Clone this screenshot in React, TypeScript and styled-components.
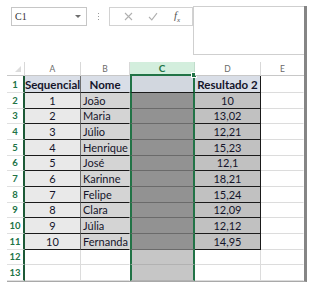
import React from 'react';
import styled, { createGlobalStyle } from 'styled-components';

const GlobalStyle = createGlobalStyle`
  body {
    margin: 0;
    background: #ffffff;
    font-family: Lato, "Liberation Sans", sans-serif;
  }
`;

const GREEN = '#217346';

const Page = styled.div`
  width: 311px;
  height: 288px;
  box-sizing: border-box;
  padding: 6px 0 0 7px;
  background: #fff;
`;

const Frame = styled.div`
  width: 297px;
  border-right: 3px solid #858585;
  border-bottom: 1px solid #a9a9a9;
`;

const TopBar = styled.div`
  display: flex;
  align-items: flex-start;
  height: 49px;
  padding-left: 4px;
  margin-bottom: 7px;
`;

const NameBox = styled.div`
  width: 76px;
  height: 19px;
  margin-top: 1px;
  box-sizing: border-box;
  border: 1px solid #c6c6c6;
  display: flex;
  align-items: center;
  justify-content: space-between;
  padding: 0 5px 0 3px;
  font-family: "Liberation Serif", serif;
  font-size: 10px;
  color: #333;
`;

const Caret = styled.span`
  width: 0;
  height: 0;
  border-left: 3px solid transparent;
  border-right: 3px solid transparent;
  border-top: 3px solid #6e6e6e;
`;

const Dots = styled.div`
  width: 22px;
  height: 19px;
  margin-top: 1px;
  display: flex;
  flex-direction: column;
  align-items: center;
  justify-content: center;
  gap: 2px;
  & > span {
    width: 1px;
    height: 1px;
    background: #9a9a9a;
  }
`;

const FxBar = styled.div`
  width: 84px;
  height: 19px;
  margin-top: 1px;
  box-sizing: border-box;
  border: 1px solid #d2d2d2;
  display: flex;
  align-items: center;
  justify-content: space-around;
  padding: 0 4px 0 6px;
`;

const FxText = styled.span`
  font-family: "Liberation Serif", serif;
  font-style: italic;
  font-size: 11px;
  color: #555;
  & > sub {
    font-size: 7px;
  }
`;

const FormulaInput = styled.div`
  flex: 1;
  height: 49px;
  box-sizing: border-box;
  border: 1px solid #cfcfcf;
  border-right: none;
`;

const Sheet = styled.div`
  display: grid;
  grid-template-columns: 18px 56px 49px 65px 66px 43px;
  grid-template-rows: 14px 17px repeat(12, 15.67px);
`;

const Corner = styled.div`
  position: relative;
  border-right: 1px solid #d8d8d8;
  border-bottom: 1px solid #c8c8c8;
  &::after {
    content: '';
    position: absolute;
    right: 3px;
    bottom: 3px;
    border-left: 6px solid transparent;
    border-bottom: 6px solid #dcdcdc;
  }
`;

const ColHead = styled.div<{ $active?: boolean }>`
  position: relative;
  box-sizing: border-box;
  display: flex;
  align-items: center;
  justify-content: center;
  font-size: ${p => (p.$active ? '10px' : '8.5px')};
  font-weight: ${p => (p.$active ? 700 : 400)};
  color: ${p => (p.$active ? GREEN : '#6a6a6a')};
  background: ${p => (p.$active ? '#d3eedd' : '#fff')};
  border-right: 1px solid ${p => (p.$active ? '#c0dccb' : '#d8d8d8')};
  border-bottom: ${p => (p.$active ? `2px solid ${GREEN}` : '1px solid #c8c8c8')};
`;

const Handle = styled.span`
  position: absolute;
  right: -3px;
  bottom: -4px;
  width: 4px;
  height: 4px;
  background: ${GREEN};
  border: 1px solid #fff;
`;

const RowHead = styled.div`
  box-sizing: border-box;
  display: flex;
  align-items: center;
  justify-content: center;
  font-size: 9.5px;
  font-weight: 700;
  color: ${GREEN};
  border-right: 2px solid #1d5a37;
  border-bottom: 1px solid #e0e0e0;
`;

type Tone = 'head' | 'a' | 'b' | 'c' | 'cHead' | 'cEmpty' | 'd' | 'empty';

const bgFor: Record<Tone, string> = {
  head: '#d9dee7',
  a: '#e9e9e9',
  b: '#d4d4d4',
  c: '#929292',
  cHead: '#d2d7df',
  cEmpty: '#c6c6c6',
  d: '#c1c1c1',
  empty: '#ffffff',
};

const Cell = styled.div<{ $tone: Tone; $align?: string; $bold?: boolean; $edge?: string }>`
  box-sizing: border-box;
  display: flex;
  align-items: center;
  justify-content: ${p => p.$align || 'center'};
  padding: 0 2px;
  overflow: hidden;
  white-space: nowrap;
  font-size: ${p => (p.$bold ? '11.5px' : '11px')};
  font-weight: ${p => (p.$bold ? 700 : 400)};
  color: #14142a;
  background: ${p => bgFor[p.$tone]};
  border-bottom: 1px solid
    ${p =>
      p.$tone === 'empty'
        ? '#dcdcdc'
        : p.$tone === 'cEmpty'
        ? '#b2b2b2'
        : p.$tone === 'c'
        ? '#6a6a6a'
        : '#1a1a1a'};
  border-right: 1px solid ${p => p.$edge || '#dcdcdc'};
  ${p =>
    p.$tone === 'c' || p.$tone === 'cHead' || p.$tone === 'cEmpty'
      ? `border-left: 2px solid ${GREEN}; border-right: 2px solid ${GREEN};`
      : ''}
`;

const rows: [string, string, string][] = [
  ['1', 'João', '10'],
  ['2', 'Maria', '13,02'],
  ['3', 'Júlio', '12,21'],
  ['4', 'Henrique', '15,23'],
  ['5', 'José', '12,1'],
  ['6', 'Karinne', '18,21'],
  ['7', 'Felipe', '15,24'],
  ['8', 'Clara', '12,09'],
  ['9', 'Júlia', '12,12'],
  ['10', 'Fernanda', '14,95'],
];

const XIcon = () => (
  <svg width="9" height="9" viewBox="0 0 9 9">
    <path d="M1 1 L8 8 M8 1 L1 8" stroke="#b0b0b0" strokeWidth="1.1" />
  </svg>
);

const CheckIcon = () => (
  <svg width="10" height="9" viewBox="0 0 10 9">
    <path d="M1 5 L3.8 7.8 L9 1.2" stroke="#b0b0b0" strokeWidth="1.1" fill="none" />
  </svg>
);

const App: React.FC = () => {
  return (
    <Page>
      <GlobalStyle />
      <Frame>
        <TopBar>
          <NameBox>
            <span>C1</span>
            <Caret />
          </NameBox>
          <Dots>
            <span />
            <span />
            <span />
          </Dots>
          <FxBar>
            <XIcon />
            <CheckIcon />
            <FxText>
              f<sub>x</sub>
            </FxText>
          </FxBar>
          <FormulaInput />
        </TopBar>

        <Sheet>
          <Corner />
          <ColHead>A</ColHead>
          <ColHead>B</ColHead>
          <ColHead $active>
            C
            <Handle />
          </ColHead>
          <ColHead>D</ColHead>
          <ColHead style={{ borderRight: 'none' }}>E</ColHead>

          <RowHead>1</RowHead>
          <Cell $tone="head" $bold $edge="#6f6f6f">Sequencial</Cell>
          <Cell $tone="head" $bold $edge="transparent">Nome</Cell>
          <Cell $tone="cHead" />
          <Cell $tone="head" $bold $edge="#1a1a1a">Resultado 2</Cell>
          <Cell $tone="empty" $edge="transparent" />

          {rows.map(([seq, name, result], i) => (
            <React.Fragment key={seq}>
              <RowHead>{i + 2}</RowHead>
              <Cell $tone="a" $edge="#6f6f6f">{seq}</Cell>
              <Cell $tone="b" $align="flex-start" $edge="transparent">{name}</Cell>
              <Cell $tone="c" />
              <Cell $tone="d" $edge="#1a1a1a">{result}</Cell>
              <Cell $tone="empty" $edge="transparent" />
            </React.Fragment>
          ))}

          {[12, 13].map(n => (
            <React.Fragment key={n}>
              <RowHead>{n}</RowHead>
              <Cell $tone="empty" />
              <Cell $tone="empty" $edge="transparent" />
              <Cell $tone="cEmpty" />
              <Cell $tone="empty" />
              <Cell $tone="empty" $edge="transparent" />
            </React.Fragment>
          ))}
        </Sheet>
      </Frame>
    </Page>
  );
};

export default App;
